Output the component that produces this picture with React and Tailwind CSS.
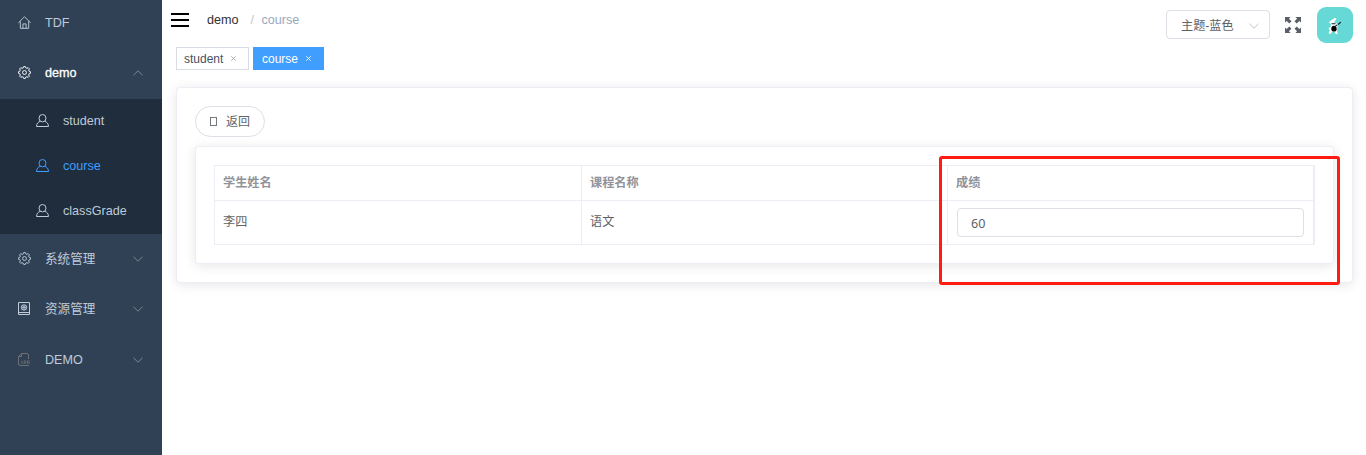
import React from 'react';

const HomeIcon = () => (
  <svg width="13" height="13" viewBox="0 0 14 14" fill="none" stroke="currentColor" strokeWidth="1">
    <path d="M.4 7.400 7 .8l6.600 6.600M2.500 5.600v7.700h9V5.600M5.300 13.300V8.500h3.400v4.800" />
  </svg>
);

const GearIcon = () => (
  <svg width="13" height="13" viewBox="0 0 14 14" fill="none" stroke="currentColor" strokeWidth="1">
    <path d="M5.600 2.100L6.100.6H7.900L8.400 2.100L9.500 2.500L11 1.800L12.200 3L11.500 4.500L11.900 5.600L13.400 6.100V7.900L11.900 8.400L11.500 9.500L12.200 11L11 12.200L9.500 11.500L8.400 11.900L7.900 13.400H6.100L5.600 11.900L4.500 11.500L3 12.200L1.800 11L2.500 9.500L2.100 8.400L.6 7.900V6.100L2.100 5.600L2.500 4.500L1.800 3L3 1.800L4.500 2.500z" />
    <circle cx="7" cy="7" r="2.100" />
  </svg>
);

const UserIcon = () => (
  <svg width="13" height="13" viewBox="0 0 13 13" fill="none" stroke="currentColor" strokeWidth="1">
    <ellipse cx="6.500" cy="4.200" rx="3.500" ry="3.700" />
    <path d="M4.400 7.300C2 7.900.6 9.700.5 12.500h12C12.400 9.700 11 7.900 8.600 7.300" />
  </svg>
);

const ResourceIcon = () => (
  <svg width="14" height="14" viewBox="0 0 14 14" fill="none" stroke="currentColor" strokeWidth="1">
    <path d="M1.500.5h11v12h-11zM1.500 10.500h11" />
    <circle cx="7" cy="5.500" r="2.700" />
    <path d="M4.500 5.500h5M7 3v5M5.200 3.700l3.600 3.600M8.800 3.700 5.200 7.300" strokeWidth="0.7" />
  </svg>
);

const LogIcon = () => (
  <svg width="14" height="14" viewBox="0 0 14 14" fill="none" stroke="currentColor" strokeWidth="1">
    <path d="M11.500 6V2q0-1.500-1.500-1.500H4.500l-3 3V11q0 1.500 1.500 1.500h9M4.500.5v3h-3" />
    <path d="M4.800 7.500v3h1.500M7.200 7.800h1.600v2.500H7.200zM12.500 7.800h-2v2.500h2V9.100h-1" strokeWidth="0.8" />
  </svg>
);

const Chevron = ({ up }) => (
  <svg width="12" height="8" viewBox="0 0 12 8" fill="none" stroke="currentColor" strokeWidth="1">
    <path d={up ? 'M1.500 6.200 6 1.800l4.500 4.400' : 'M1.500 1.800 6 6.200l4.500-4.400'} />
  </svg>
);

const MenuRow = ({ icon, label, up, arrow, className }) => (
  <div className={`flex items-center pr-[18px] pl-[18px] ${className}`}>
    <span className="mb-px flex w-[27px] shrink-0">{icon}</span>
    <span className="grow">{label}</span>
    {arrow && (
      <span className="mb-px text-[#7d8590]">
        <Chevron up={up} />
      </span>
    )}
  </div>
);

const SubRow = ({ label, active }) => (
  <div className={`flex h-[45px] items-center pl-[36px] ${active ? 'text-[#409eff]' : 'text-[#bfcbd9]'}`}>
    <span className="mb-[3px] flex w-[27px]"><UserIcon /></span>
    <span>{label}</span>
  </div>
);

const Sidebar = () => (
  <aside className="w-[162px] shrink-0 bg-[#304156] text-[12.6px] text-[#bfcbd9]">
    <MenuRow icon={<HomeIcon />} label="TDF" className="h-[46px]" />
    <MenuRow icon={<GearIcon />} label="demo" arrow up className="h-[53px] pt-px text-white [-webkit-text-stroke:0.3px_white]" />
    <div className="bg-[#1f2d3d]">
      <SubRow label="student" />
      <SubRow label="course" active />
      <SubRow label="classGrade" />
    </div>
    <MenuRow icon={<GearIcon />} label="系统管理" arrow className="h-[50px]" />
    <MenuRow icon={<span className="-ml-px"><ResourceIcon /></span>} label="资源管理" arrow className="h-[50px]" />
    <MenuRow icon={<span className="-ml-px text-[#6c7074]"><LogIcon /></span>} label="DEMO" arrow className="h-[52px]" />
  </aside>
);

const ExpandIcon = () => (
  <svg width="16" height="16" viewBox="0 0 16 16" fill="#5a5e66">
    <path d="M0 0h5.600L3.900 1.700 6.500 4.300 4.300 6.500 1.700 3.900 0 5.600zM16 0v5.600l-1.700-1.700L11.700 6.500 9.500 4.300l2.600-2.600L10.400 0zM0 16v-5.600l1.700 1.700L4.300 9.500 6.500 11.700l-2.600 2.600L5.600 16zM16 16h-5.600l1.700-1.700L9.500 11.700 11.700 9.500l2.600 2.600 1.700-1.700z" />
  </svg>
);

const Avatar = () => (
  <svg width="36" height="36" viewBox="0 0 36 36">
    <rect width="36" height="36" rx="9" fill="#66d9d6" />
    <path d="M12.500 14.500l5.500-3.800 1.500 1-2.500 3.800 3 1 .5 4-.5 3 .5 3.500-1.500.3-1.500-2.500-2.500.2-1.500 2-2-.8 1.300-3-1.300-2 2.200-1.500.3-2.700-1.800-1z" fill="#fff" />
    <ellipse cx="17" cy="21.700" rx="2.700" ry="2.900" />
    <path d="M14.500 16.700h4M18.500 19l1.500-1M21 17.500l2.800-2.200" stroke="#123" strokeWidth="1.100" />
  </svg>
);

const Header = () => (
  <header className="flex h-[47px] items-start">
    <svg className="mt-[13px] ml-[9px]" width="18" height="14" viewBox="0 0 18 14">
      <path d="M0 1h18M0 7h18M0 13h18" stroke="#000" strokeWidth="2" />
    </svg>
    <nav className="mt-[10px] ml-[18px] flex text-[12.6px] leading-[20px]">
      <span className="text-[#303133]">demo</span>
      <span className="ml-[12px] w-[11px] text-[#c0c4cc]">/</span>
      <span className="text-[#97a8be]">course</span>
    </nav>
    <div className="mt-[10px] ml-auto flex h-[29px] w-[104px] items-center justify-between rounded-[4px] border border-[#dcdfe6] pt-[3px] pr-[9px] pl-[14px] text-[12.15px] text-[#606266]">
      <span>主题-蓝色</span>
      <span className="text-[#c0c4cc]"><Chevron /></span>
    </div>
    <div className="mt-[17px] ml-[15px]"><ExpandIcon /></div>
    <div className="mt-[7px] mr-[13px] ml-[16px]"><Avatar /></div>
  </header>
);

const Tabs = () => (
  <div className="flex h-[23px] gap-1 pl-[14px] text-[12px]">
    <div className="flex w-[73px] items-center border border-[#d8dce5] pl-[7px] text-[#495060]">
      student<Close className="ml-[8px] text-[#a0a5ae]" />
    </div>
    <div className="flex w-[71px] items-center border border-[#409eff] bg-[#409eff] pl-[8px] text-white">
      course<Close className="ml-[8px]" />
    </div>
  </div>
);

const Close = ({ className }) => (
  <svg className={className} width="5" height="5" viewBox="0 0 5 5" stroke="currentColor" strokeWidth="0.9">
    <path d="M.3.3l4.400 4.400M4.700.3.3 4.700" />
  </svg>
);

const GradeTable = () => (
  <div className="grid h-[80px] grid-cols-[367px_366px_1fr] grid-rows-[35px_44px] border-t border-r-2 border-l border-[#ebeef5] text-[12.15px] text-[#606266]">
    {['学生姓名', '课程名称', '成绩'].map((title, i) => (
      <div key={title} className={`flex items-center border-b border-[#ebeef5] pt-px pl-[8px] font-bold text-[#909399] ${i < 2 ? 'border-r' : ''}`}>
        {title}
      </div>
    ))}
    <div className="flex items-center border-r border-b border-[#ebeef5] pl-[8px]">李四</div>
    <div className="flex items-center border-r border-b border-[#ebeef5] pl-[8px]">语文</div>
    <div className="flex items-center border-b border-[#ebeef5] px-[9px]">
      <input
        defaultValue="60"
        className="h-[29px] w-full rounded-[4px] border border-[#dcdfe6] bg-white pt-px pl-[13px] font-['Noto_Sans',sans-serif] text-[12.6px] outline-none"
      />
    </div>
  </div>
);

export default function App() {
  return (
    <div className="relative flex h-[455px] w-[1366px] overflow-hidden bg-white font-['Liberation_Sans','Noto_Sans_CJK_SC',sans-serif]">
      <Sidebar />
      <main className="min-w-0 grow">
        <Header />
        <Tabs />
        <section className="mt-[17px] mr-[13px] ml-[14px] h-[196px] rounded-[4px] border border-[#ebeef5] bg-white px-[18px] pt-[18px] shadow-[0_2px_12px_rgba(0,0,0,0.1)]">
          <button className="flex h-[31px] w-[70px] items-center rounded-full border border-[#dcdfe6] pl-[14px] text-[12px] text-[#606266]">
            <span className="mr-[9px] h-[9px] w-[7px] border border-[#74777c]" />
            返回
          </button>
          <div className="mt-[9px] h-[118px] rounded-[4px] border border-[#ebeef5] bg-white p-[18px] shadow-[0_2px_12px_rgba(0,0,0,0.1)]">
            <GradeTable />
          </div>
        </section>
      </main>
      <div className="pointer-events-none absolute top-[156px] left-[939px] h-[129px] w-[401px] rounded-[3px] border-3 border-[#ff1b0f]" />
    </div>
  );
}
